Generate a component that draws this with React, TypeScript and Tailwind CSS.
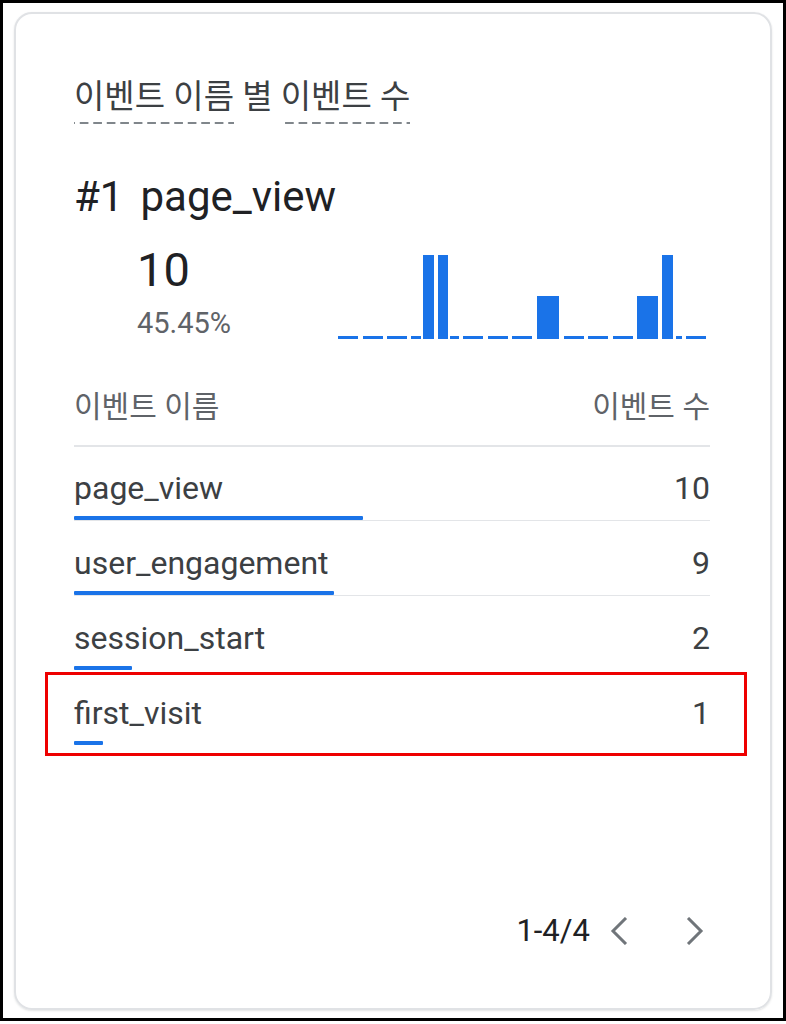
import React from "react";

const rows = [
  { name: "page_view", value: 10 },
  { name: "user_engagement", value: 9 },
  { name: "session_start", value: 2 },
  { name: "first_visit", value: 1 },
];

const flats: [number, number][] = [
  [0, 20], [25, 45], [49, 69], [73, 83], [112, 121], [125, 145], [150, 170], [174, 194],
  [226, 246], [250, 270], [275, 295], [338, 344], [348, 368],
];
const bars: [number, number, number][] = [
  [85, 96, 5], [100, 110, 5], [199, 221, 46], [299, 320, 46], [324, 335, 5],
];

function Chart() {
  return (
    <svg width="370" height="90" viewBox="0 0 370 90" className="block">
      {flats.map(([a, b], i) => (
        <rect key={"f" + i} x={a} y={86} width={b - a} height={3} fill="#1a73e8" />
      ))}
      {bars.map(([a, b, t], i) => (
        <rect key={"b" + i} x={a} y={t} width={b - a} height={89 - t} fill="#1a73e8" />
      ))}
    </svg>
  );
}

const dashed =
  "inline-block pb-[7px] bg-[linear-gradient(to_right,#80868b_62%,transparent_62%)] bg-[length:13.5px_2px] bg-bottom bg-repeat-x";

export default function App() {
  return (
    <div
      className="w-[786px] h-[1024px] bg-white"
      style={{ fontFamily: "Roboto, 'Noto Sans CJK KR', 'Noto Sans', sans-serif" }}
    >
      <div className="h-[1021px] border-[3px] border-black pt-[9px] pl-[11px] pr-[11px] pb-[8px]">
        <div className="h-full rounded-[18px] border-2 border-[#e0e2e5] shadow-[0_1px_2px_rgba(60,64,67,0.15)] flex flex-col pl-[58px] pr-[60px] pt-[63px] pb-[57px]">
          <div className="text-[33px] leading-[40px] text-[#3c4043] whitespace-nowrap">
            <span className={dashed}>이벤트 이름</span>
            <span> 별 </span>
            <span className={dashed}>이벤트 수</span>
          </div>

          <div className="mt-[48px] text-[42px] leading-[50px] text-[#202124] flex gap-[17px]">
            <span>#1</span>
            <span>page_view</span>
          </div>

          <div className="flex items-end mt-[20px]">
            <div className="ml-[63px] flex flex-col">
              <span className="text-[47px] leading-[56px] text-[#202124]">10</span>
              <span className="text-[29px] leading-[34px] text-[#5f6368] mt-[8px]">45.45%</span>
            </div>
            <div className="ml-auto mr-[2px]">
              <Chart />
            </div>
          </div>

          <div className="mt-[48px] flex justify-between text-[30px] leading-[38px] text-[#5f6368] pb-[19px] border-b-2 border-[#e3e5e8]">
            <span>이벤트 이름</span>
            <span>이벤트 수</span>
          </div>

          <div className="flex flex-col">
            {rows.map((r, i) => (
              <div key={r.name} className={i === 0 ? "relative pt-[21px]" : "relative pt-[22px]"}>
                {r.name === "first_visit" && (
                  <div className="absolute left-[-29px] right-[-37px] top-[1px] bottom-[-10px] border-[3px] border-[#ee0000]" />
                )}
                <div className="flex justify-between items-center text-[32px] leading-[40px] text-[#3c4043]">
                  <span>{r.name}</span>
                  <span>{r.value}</span>
                </div>
                <div className="mt-[8px] flex flex-col">
                  <div className="h-[4px] bg-[#1a73e8] rounded-[1px]" style={{ width: `${(r.value / 10) * 289}px` }} />
                  <div className={i < 2 ? "h-px bg-[#e3e5e8]" : "h-px"} />
                </div>
              </div>
            ))}
          </div>

          <div className="mt-auto flex items-center justify-end mr-[2px]">
            <span className="text-[31px] leading-[40px] text-[#202124]">1-4/4</span>
            <svg width="28" height="28" viewBox="0 0 28 28" fill="none" stroke="#70757a" strokeWidth="3" className="ml-[16px]">
              <path d="M20 1 L7 14 L20 27" />
            </svg>
            <svg width="28" height="28" viewBox="0 0 28 28" fill="none" stroke="#70757a" strokeWidth="3" className="ml-[46px]">
              <path d="M8 1 L21 14 L8 27" />
            </svg>
          </div>
        </div>
      </div>
    </div>
  );
}
